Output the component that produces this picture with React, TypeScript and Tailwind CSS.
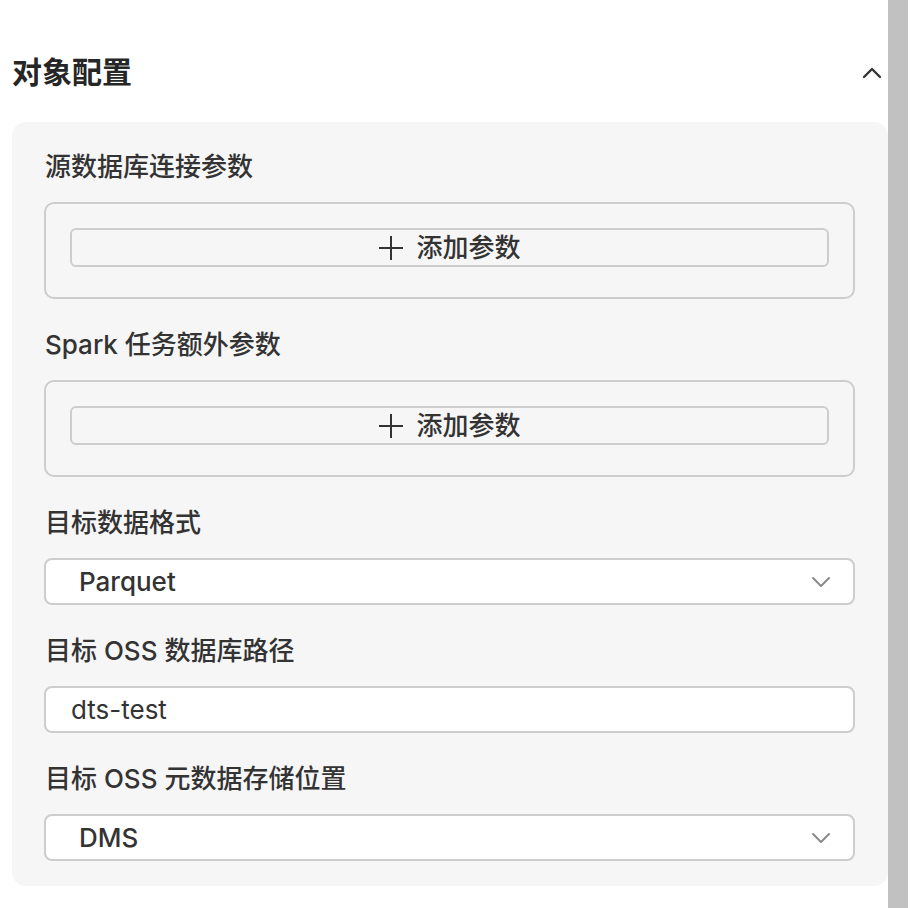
import React from "react";

const FONT = { fontFamily: '"Inter", "Noto Sans CJK SC", sans-serif' };

function ChevronDown() {
  return (
    <svg width="20" height="12" viewBox="0 0 20 12" fill="none">
      <path d="M2 2 L10 10 L18 2" stroke="#8a8a8a" strokeWidth="2" strokeLinecap="round" strokeLinejoin="round" />
    </svg>
  );
}

function AddBox() {
  return (
    <div className="rounded-[10px] border-2 border-[#cdcdcd] px-[24px] pt-[24px] pb-[30px]">
      <div className="flex h-[39px] items-center justify-center gap-[12px] rounded-[6px] border-2 border-[#cdcdcd]">
        <svg width="26" height="26" viewBox="0 0 26 26" fill="none">
          <path d="M13 1 V25 M1 13 H25" stroke="#333" strokeWidth="2" />
        </svg>
        <span className="text-[26px] font-medium leading-none text-[#333]">添加参数</span>
      </div>
    </div>
  );
}

function Label({ children }: { children: React.ReactNode }) {
  return (
    <div className="mb-[17px] pl-[1px] text-[26px] font-medium leading-[36px] text-[#333]">{children}</div>
  );
}

function Select({ value }: { value: string }) {
  return (
    <div className="flex h-[47px] items-center justify-between rounded-[8px] border-2 border-[#cdcdcd] bg-white pl-[33px] pr-[22px]">
      <span className="text-[26px] font-medium leading-none text-[#333]">{value}</span>
      <ChevronDown />
    </div>
  );
}

export default function App() {
  return (
    <div className="flex h-[908px] w-[916px] bg-white" style={FONT}>
      <div className="w-[888px] pl-[12px]">
        <div className="flex h-[40px] items-center justify-between pr-[6px] mt-[52px] mb-[30px]">
          <span className="text-[30px] font-semibold leading-[40px] text-[#262626]">对象配置</span>
          <svg width="20" height="13" viewBox="0 0 20 13" fill="none">
            <path d="M2 11 L10 3 L18 11" stroke="#333" strokeWidth="2.4" strokeLinecap="round" strokeLinejoin="round" />
          </svg>
        </div>
        <div className="flex flex-col gap-[28px] rounded-[14px] bg-[#f6f6f6] pl-[32px] pr-[33px] pt-[27px] pb-[25px]">
          <div>
            <Label>源数据库连接参数</Label>
            <AddBox />
          </div>
          <div>
            <Label>Spark 任务额外参数</Label>
            <AddBox />
          </div>
          <div>
            <Label>目标数据格式</Label>
            <Select value="Parquet" />
          </div>
          <div>
            <Label>目标 OSS 数据库路径</Label>
            <div className="flex h-[47px] items-center rounded-[8px] border-2 border-[#cdcdcd] bg-white pl-[25px]">
              <span className="text-[26px] leading-none text-[#333]">dts-test</span>
            </div>
          </div>
          <div>
            <Label>目标 OSS 元数据存储位置</Label>
            <Select value="DMS" />
          </div>
        </div>
      </div>
      <div className="h-[908px] w-[20px] bg-[#c1c1c1]" />
    </div>
  );
}
